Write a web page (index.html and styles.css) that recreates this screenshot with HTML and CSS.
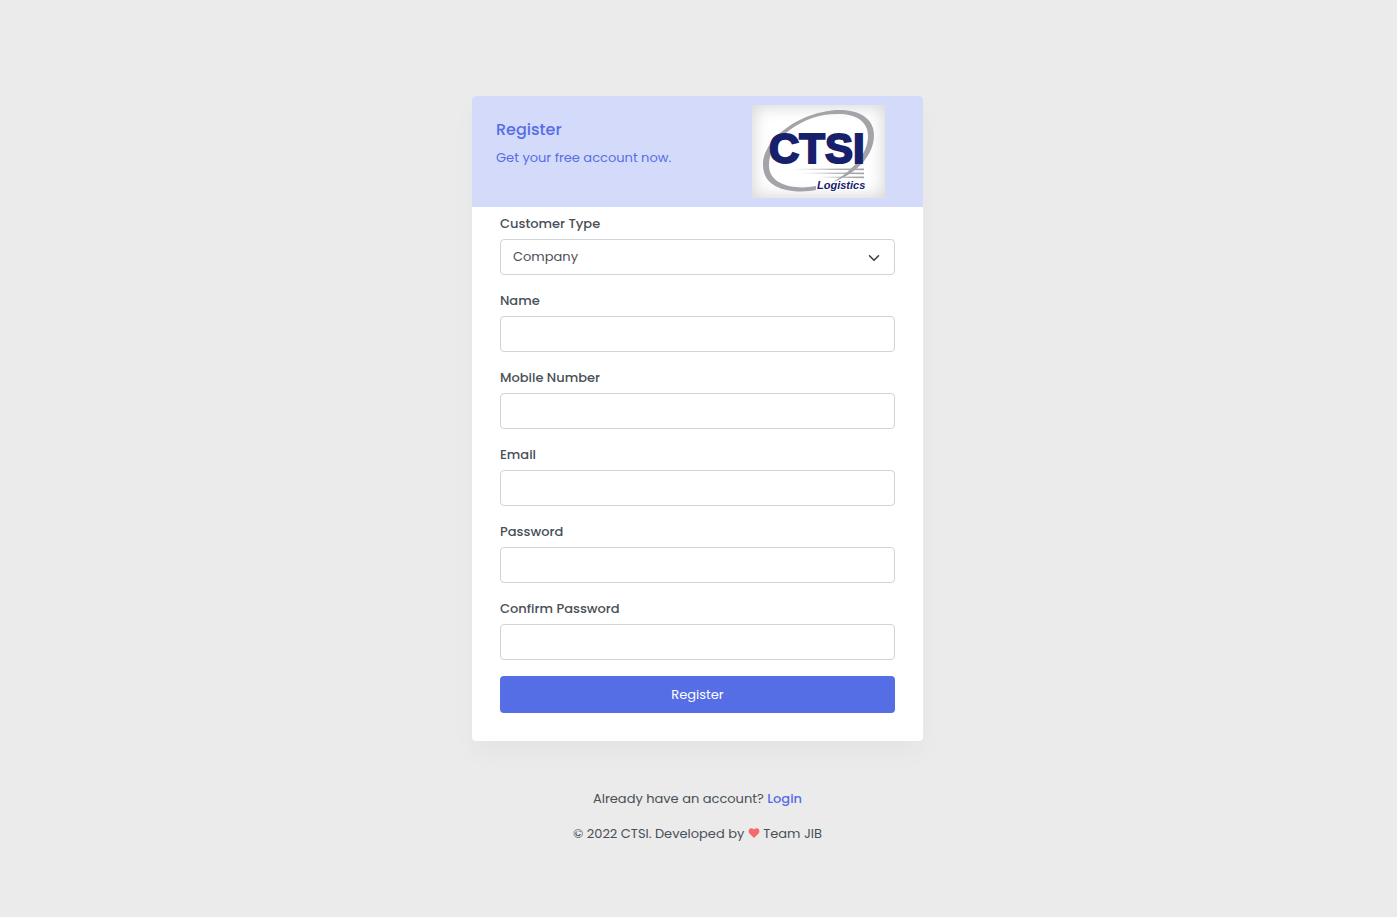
FILE: index.html
```html
<!DOCTYPE html>
<html lang="en">
<head>
<meta charset="utf-8">
<meta name="viewport" content="width=device-width, initial-scale=1">
<title>Register | CTSI Logistics</title>
<link rel="stylesheet" href="styles.css">
</head>
<body>
<main class="page">
  <section class="card">
    <header class="card-header">
      <div class="intro">
        <h1 class="title">Register</h1>
        <p class="subtitle">Get your free account now.</p>
      </div>
      <svg class="logo" viewBox="0 0 133 93" role="img" aria-label="CTSI Logistics">
        <defs>
          <linearGradient id="fade" x1="0" x2="1" y1="0" y2="0">
            <stop offset="0" stop-color="#a3a5aa" stop-opacity="0.1"/>
            <stop offset="0.6" stop-color="#a3a5aa"/>
          </linearGradient>
        </defs>
        <path fill="#a2a4a8" d="M64 85C50 88 11 89 11 60C11 32 52 5 88 5C108 5 122 14 122 30C122 51 104 69 81 77C100 66 116 49 116 31C116 17 105 9 86 9C54 8 17 32 17 60C17 81 44 85 64 81Z"/>
        <path fill="url(#fade)" d="M28 64L112 63.500V65.200ZM46 68L112 67.500V69.200ZM66 72L112 71.500V73.200Z"/>
        <text class="logo-name" x="17" y="58">CTSI</text>
        <text class="logo-sub" x="65" y="84">Logistics</text>
      </svg>
    </header>
    <form class="form">
      <div class="field">
        <label class="label" for="type">Customer Type</label>
        <div class="select-wrap">
          <select class="control" id="type"><option>Company</option><option>Individual</option></select>
          <svg class="chevron" viewBox="0 0 16 16" aria-hidden="true"><path d="M2 5l6 6 6-6"/></svg>
        </div>
      </div>
      <div class="field">
        <label class="label" for="name">Name</label>
        <input class="control" id="name" type="text">
      </div>
      <div class="field">
        <label class="label" for="mobile">Mobile Number</label>
        <input class="control" id="mobile" type="tel">
      </div>
      <div class="field">
        <label class="label" for="email">Email</label>
        <input class="control" id="email" type="email">
      </div>
      <div class="field">
        <label class="label" for="password">Password</label>
        <input class="control" id="password" type="password">
      </div>
      <div class="field">
        <label class="label" for="confirm">Confirm Password</label>
        <input class="control" id="confirm" type="password">
      </div>
      <button class="submit" type="submit">Register</button>
    </form>
  </section>
  <footer class="footer">
    <p>Already have an account? <a class="login" href="#">Login</a></p>
    <p>© 2022 CTSI. Developed by
      <svg class="heart" viewBox="0 0 12 11" role="img" aria-label="love"><path d="M6 11L1 6C-2 2 3-2 6 2C9-2 14 2 11 6Z"/></svg>
      Team JIB</p>
  </footer>
</main>
</body>
</html>
```
FILE: styles.css
```css
* { box-sizing: border-box; }

body {
  margin: 0;
  background: #ebebeb;
  color: #495057;
  font-family: Poppins, Inter, sans-serif;
  font-size: 13px;
  line-height: 20px;
}

h1, p { margin: 0; }

.page {
  display: flex;
  flex-direction: column;
  align-items: center;
  gap: 48px;
  padding: 96px 14px 72px 12px;
}

.card {
  width: 100%;
  max-width: 451px;
  overflow: hidden;
  border-radius: 4px;
  background: #fff;
  box-shadow: 0 12px 24px rgba(18, 38, 63, 0.03);
}

.card-header {
  display: flex;
  justify-content: space-between;
  align-items: flex-start;
  padding: 9px 38px 9px 24px;
  background: #d4dafa;
  color: #556ee6;
}

.intro { padding-top: 15px; }

.title {
  margin-bottom: 8px;
  font-size: 16px;
  font-weight: 500;
  line-height: 20px;
}

.logo {
  flex: none;
  width: 133px;
  height: 93px;
  border-radius: 2px;
  background: #fff;
  box-shadow: inset 0 0 16px 2px #d6d6d6;
}

.logo-name {
  fill: #17206a;
  stroke: #17206a;
  stroke-width: 2px;
  font: bold 42px "Liberation Sans", Arial, sans-serif;
}

.logo-sub {
  fill: #17206a;
  stroke: #fff;
  stroke-width: 2px;
  paint-order: stroke;
  font: italic bold 11px "Liberation Sans", Arial, sans-serif;
}

.form {
  display: flex;
  flex-direction: column;
  gap: 16px;
  padding: 7px 28px 28px;
}

.field {
  display: flex;
  flex-direction: column;
  gap: 5px;
}

.label { font-weight: 500; }

.control {
  display: block;
  width: 100%;
  height: 36px;
  padding: 0 12px;
  border: 1px solid #ced4da;
  border-radius: 4px;
  background: #fff;
  color: #495057;
  font: inherit;
  appearance: none;
}

.select-wrap { position: relative; }

.chevron {
  position: absolute;
  top: 13px;
  right: 15px;
  width: 12px;
  height: 12px;
  fill: none;
  stroke: #343a40;
  stroke-width: 2px;
  stroke-linecap: round;
  stroke-linejoin: round;
  pointer-events: none;
}

.submit {
  height: 37px;
  border: 0;
  border-radius: 4px;
  background: #556ee6;
  color: #fff;
  font: inherit;
}

.footer {
  display: flex;
  flex-direction: column;
  gap: 15px;
  text-align: center;
}

.login {
  color: #556ee6;
  font-weight: 500;
  text-decoration: none;
}

.heart {
  width: 12px;
  height: 10px;
  fill: #f46a6a;
}
```
